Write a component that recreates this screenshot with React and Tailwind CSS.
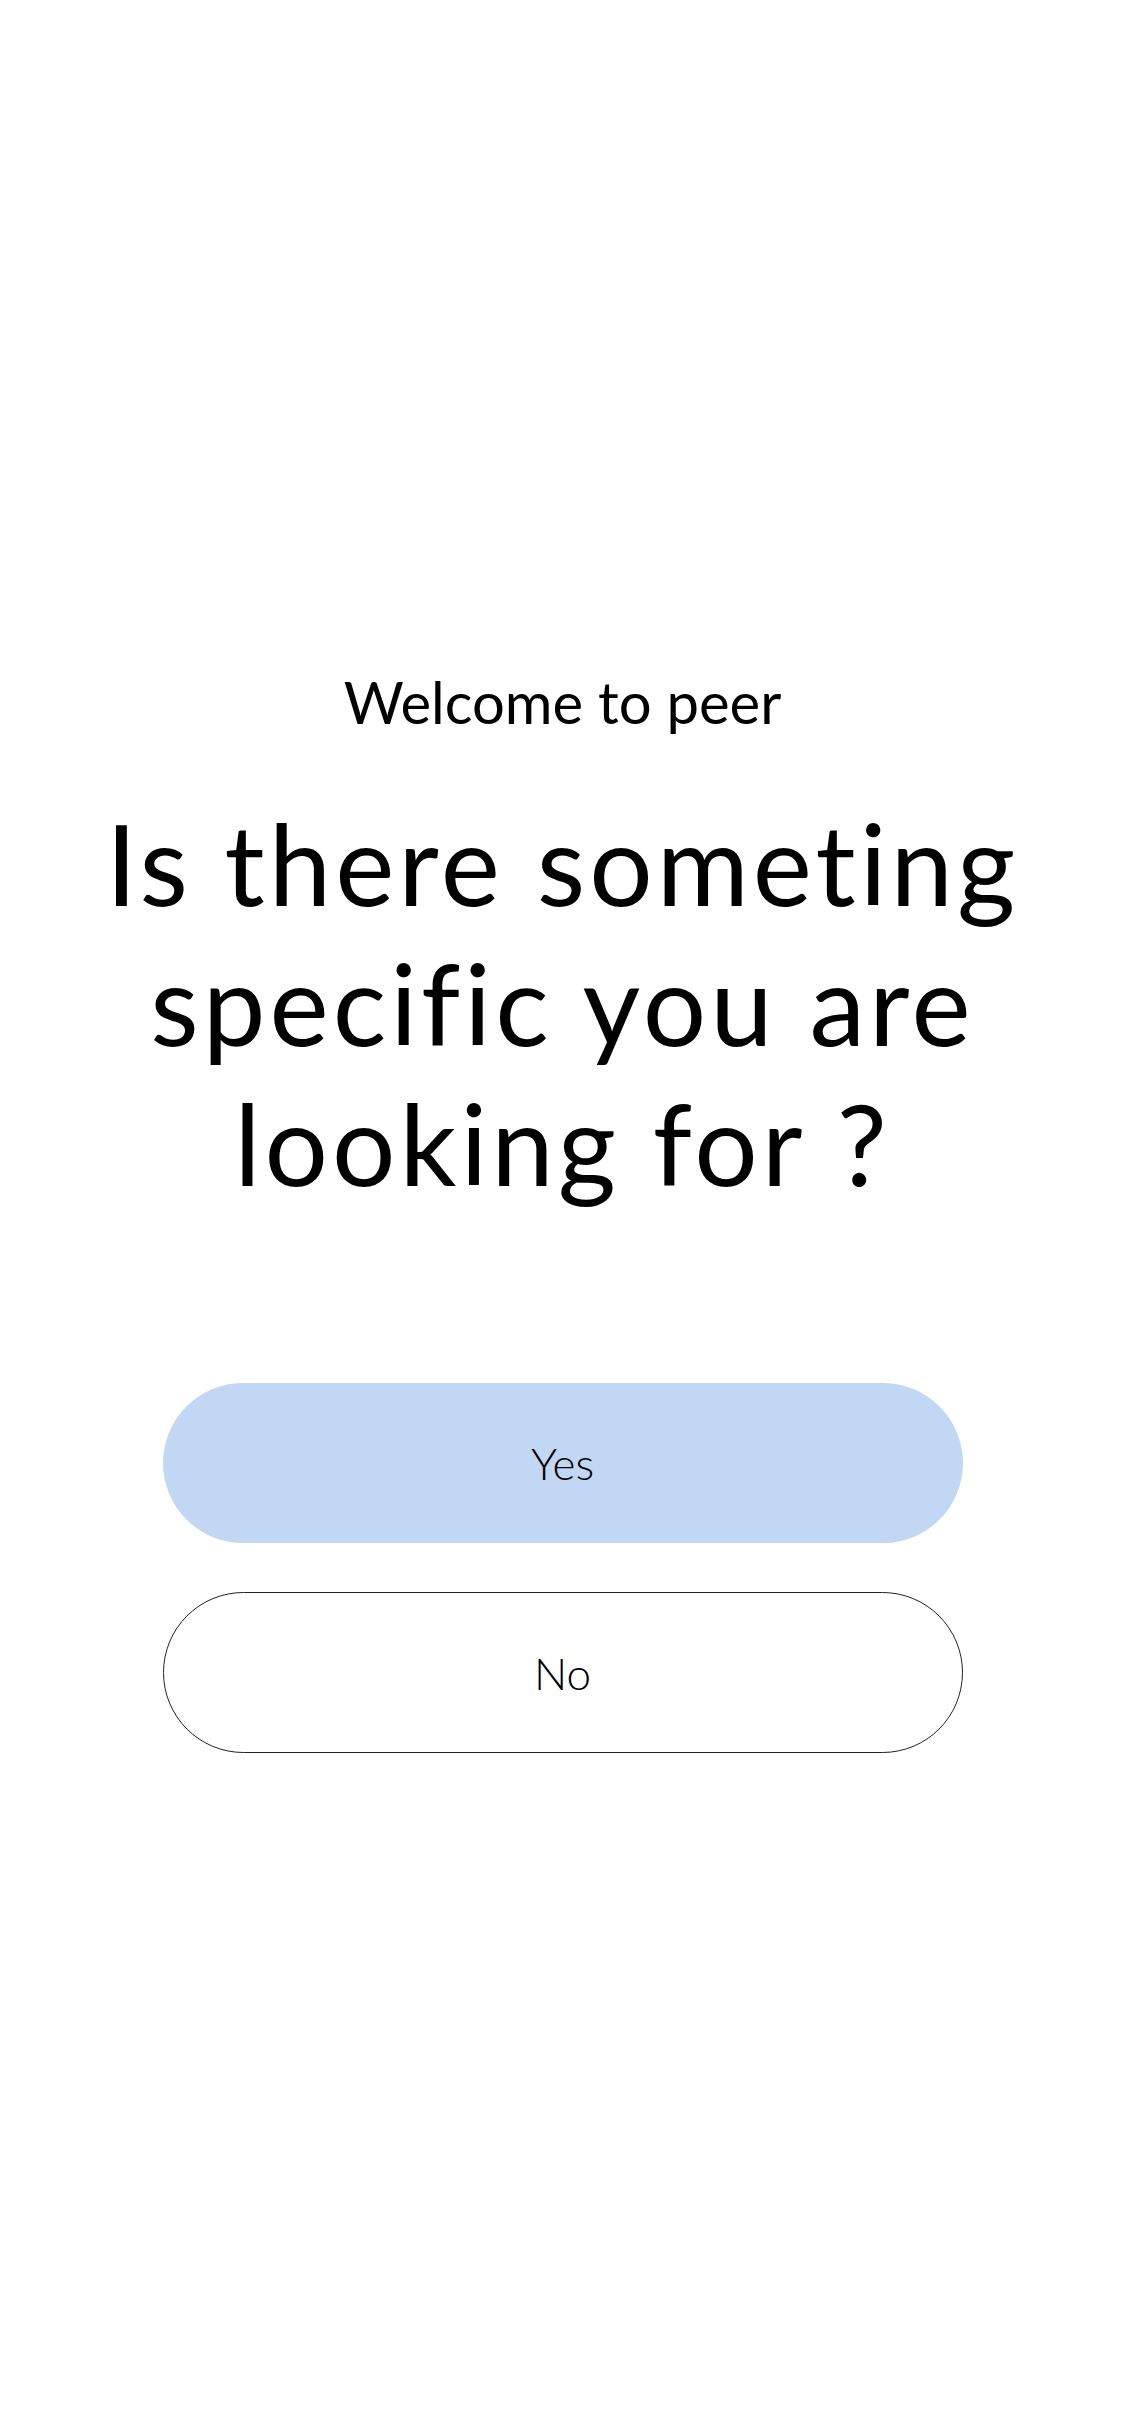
export default function App() {
  return (
    <div className="min-h-[2436px] w-full bg-white flex flex-col items-center text-black" style={{ fontFamily: '"Lato", "Noto Sans", sans-serif' }}>
      <div className="pt-[667px] text-[58px] leading-[70px] font-normal">Welcome to peer</div>
      <h1 className="mt-[56px] w-[980px] text-center text-[112px] leading-[140px] font-normal tracking-[4px]">
        Is there someting specific you are looking for ?
      </h1>
      <div className="mt-[170px] w-[800px] flex flex-col gap-[49px]">
        <button className="h-[160px] w-full rounded-full bg-[#c1d7f4] text-[44px] font-light">Yes</button>
        <button className="h-[161px] w-full rounded-full border border-[#222] bg-white text-[44px] font-light">No</button>
      </div>
    </div>
  );
}
